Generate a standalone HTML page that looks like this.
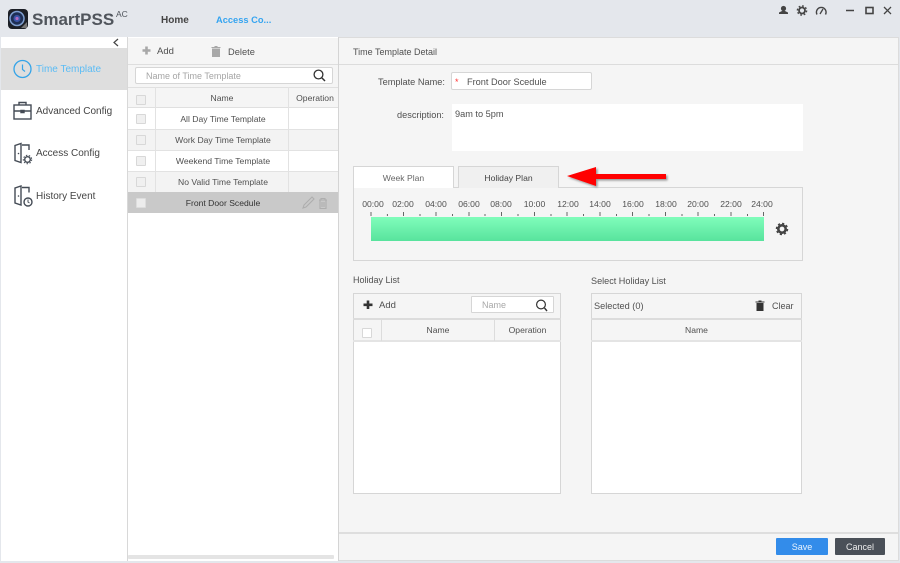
<!DOCTYPE html>
<html><head><meta charset="utf-8"><style>
html,body{margin:0;padding:0;width:900px;height:563px;overflow:hidden;background:#e4e7ec;font-family:"Liberation Sans",sans-serif;font-size:9px;color:#505050}
.a{position:absolute;box-sizing:border-box}
.t{position:absolute;white-space:nowrap;line-height:14px}
.c{text-align:center}
.h{font-size:8.6px}
.m{font-size:9.2px}
.cb{position:absolute;width:10px;height:10px;background:#f0f0f0;border:1px solid #d8d8d8;box-sizing:border-box;border-radius:1px}
svg{position:absolute;overflow:visible}
</style></head><body>
<!-- header -->
<svg style="left:0;top:0" width="40" height="37">
<rect x="8" y="9" width="20" height="20" rx="4" fill="#1c1f26"/>
<circle cx="17" cy="18.500" r="7" fill="#1e2f55" stroke="#7f9fd0" stroke-width="1.500"/>
<circle cx="17" cy="18.500" r="3.500" fill="#3a55a8"/>
<circle cx="17" cy="18.500" r="1.600" fill="#b06ac0"/>
<path d="M21 28l6-6v6z" fill="#777"/>
</svg>
<div class="t" style="left:32px;top:10px;font-size:17px;font-weight:bold;color:#50555c;line-height:20px">SmartPSS</div>
<div class="t" style="left:116px;top:9px;font-size:8.500px;color:#50555c;line-height:11px">AC</div>
<div class="t" style="left:161px;top:14px;font-size:10px;font-weight:bold;color:#444">Home</div>
<div class="t" style="left:216px;top:13px;font-size:9.300px;font-weight:bold;color:#35a4f0">Access Co...</div>
<svg style="left:0;top:0" width="900" height="37">
<g fill="#444"><circle cx="783.500" cy="8.500" r="2.600"/><path d="M779 14h9v-1.500l-3-1.500h-3l-3 1.500z"/></g>
<circle cx="802" cy="10.500" r="3" fill="none" stroke="#444" stroke-width="1.800"/>
<circle cx="802" cy="10.500" r="4.600" fill="none" stroke="#444" stroke-width="1.400" stroke-dasharray="1.800 1.800"/>
<path d="M817 14.500a4.800 4.800 0 1 1 8.500 0" fill="none" stroke="#444" stroke-width="1.400"/><path d="M820 14l3-5" stroke="#444" stroke-width="1.300"/>
<path d="M846 10.500h8" stroke="#444" stroke-width="1.500"/>
<rect x="866" y="7.500" width="7" height="6" fill="none" stroke="#444" stroke-width="1.600"/>
<path d="M884 7l7 7M891 7l-7 7" stroke="#444" stroke-width="1.300"/>
</svg>
<!-- sidebar -->
<div class="a" style="left:1px;top:37px;width:127px;height:524px;background:#fff;border-right:1px solid #d8d8d8"></div>
<svg style="left:0;top:0" width="127" height="50"><path d="M118 39l-4 3.500 4 3.500" fill="none" stroke="#444" stroke-width="1.200"/></svg>
<div class="a" style="left:1px;top:48px;width:126px;height:42px;background:#dedede"></div>
<svg style="left:0;top:0" width="127" height="220">
<circle cx="22.500" cy="69" r="8.500" fill="none" stroke="#35a4e8" stroke-width="1.300"/><path d="M22.500 64.500v5l2.500 2" fill="none" stroke="#35a4e8" stroke-width="1.200"/>
<g fill="none" stroke="#444b55" stroke-width="1.400"><rect x="14" y="105" width="17" height="14"/><path d="M14 111h17M19 105v-2.500h7v2.500" /><path d="M21 110.500h3v2h-3z" fill="#444b55"/>
<path d="M15 145.500v15l6 2v-19l-6 2zM22 145h7v5"/>
<path d="M15 188v15l6 2v-19l-6 2zM22 187.500h7v5"/>
<circle cx="27.500" cy="159.500" r="2.800"/><circle cx="27.500" cy="159.500" r="4.200" stroke-width="1" stroke-dasharray="1.500 1.500"/>
<circle cx="28" cy="202" r="4"/><path d="M28 199.500v2.500l1.500 1" stroke-width="1"/></g>
<circle cx="18.500" cy="153.500" r=".8" fill="#444b55"/><circle cx="18.500" cy="196" r=".8" fill="#444b55"/>
</svg>
<div class="t" style="left:36px;top:63px;font-size:10px;color:#5bbcf5">Time Template</div>
<div class="t" style="left:36px;top:105px;font-size:10px;color:#444">Advanced Config</div>
<div class="t" style="left:36px;top:147px;font-size:10px;color:#444">Access Config</div>
<div class="t" style="left:36px;top:190px;font-size:10px;color:#444">History Event</div>
<!-- list panel -->
<div class="a" style="left:128px;top:37px;width:211px;height:524px;background:#fff;border-right:1px solid #d4d4d4"></div>
<div class="a" style="left:128px;top:38px;width:210px;height:27px;background:#f5f5f5;border-bottom:1px solid #dedede"></div>
<div class="a" style="left:128px;top:65px;width:210px;height:22px;background:#f5f5f5"></div>
<svg style="left:0;top:0" width="300" height="60"><path d="M146.500 46.500v8M142.500 50.500h8" stroke="#a8a8a8" stroke-width="2.600"/>
<path d="M212.500 49h7v7.500h-7zM211.500 47.500h9M214.500 46.500h3" fill="#a8a8a8" stroke="#a8a8a8" stroke-width="1"/></svg>
<div class="t" style="left:157px;top:45px;font-size:9.500px">Add</div>
<div class="t" style="left:228px;top:45px;font-size:9.300px">Delete</div>
<div class="a" style="left:135px;top:67px;width:198px;height:17px;background:#fff;border:1px solid #d6d6d6;border-radius:2px"></div>
<div class="t" style="left:146px;top:68.500px;font-size:9px;color:#a5a5a5">Name of Time Template</div>
<svg style="left:0;top:0" width="340" height="90"><circle cx="318.500" cy="74.500" r="4.400" fill="none" stroke="#333" stroke-width="1.300"/><path d="M322 78l3 3" stroke="#333" stroke-width="1.500"/></svg>
<!-- table -->
<div class="a" style="left:128px;top:87px;width:210px;height:21px;background:#f5f5f5;border-top:1px solid #e0e0e0;border-bottom:1px solid #e0e0e0"></div>
<div class="a" style="left:128px;top:129px;width:210px;height:21px;background:#f3f3f3"></div>
<div class="a" style="left:128px;top:171px;width:210px;height:21px;background:#f3f3f3"></div>
<div class="a" style="left:128px;top:129px;width:210px;height:1px;background:#e2e2e2"></div>
<div class="a" style="left:128px;top:150px;width:210px;height:1px;background:#e2e2e2"></div>
<div class="a" style="left:128px;top:171px;width:210px;height:1px;background:#e2e2e2"></div>
<div class="a" style="left:155px;top:87px;width:1px;height:105px;background:#e2e2e2"></div>
<div class="a" style="left:288px;top:87px;width:1px;height:105px;background:#e2e2e2"></div>
<div class="a" style="left:128px;top:192px;width:210px;height:21px;background:#c9c9c9"></div>
<div class="cb" style="left:136px;top:95px"></div>
<div class="cb" style="left:136px;top:114px"></div>
<div class="cb" style="left:136px;top:135px"></div>
<div class="cb" style="left:136px;top:156px"></div>
<div class="cb" style="left:136px;top:177px"></div>
<div class="cb" style="left:136px;top:198px;background:#ececec;border-color:#ddd"></div>
<div class="t c h" style="left:156px;width:132px;top:91px">Name</div>
<div class="t c h" style="left:289px;width:52px;top:91px">Operation</div>
<div class="t c h" style="left:156px;width:134px;top:112px">All Day Time Template</div>
<div class="t c h" style="left:156px;width:134px;top:133px">Work Day Time Template</div>
<div class="t c h" style="left:156px;width:134px;top:154px">Weekend Time Template</div>
<div class="t c h" style="left:156px;width:134px;top:175px">No Valid Time Template</div>
<div class="t c h" style="left:156px;width:134px;top:196px;color:#333">Front Door Scedule</div>
<svg style="left:0;top:0" width="340" height="220" fill="none" stroke="#aeaeae" stroke-width="1.100">
<path d="M303 208l1-3 8-8 2 2-8 8z"/><path d="M319 200h8M321 200v-1.500h4v1.500M320 200.500v8h6v-8M322 202v5M324 202v5"/></svg>
<div class="a" style="left:128px;top:555px;width:206px;height:4px;background:#e4e4e4;border-radius:1px"></div>
<!-- detail -->
<div class="a" style="left:339px;top:37px;width:560px;height:524px;background:#f5f5f5;border-top:1px solid #dcdcdc;border-right:1px solid #dcdcdc;border-bottom:1px solid #dcdcdc"></div>
<div class="a" style="left:339px;top:64px;width:559px;height:1px;background:#dcdcdc"></div>
<div class="t" style="left:353px;top:44.500px;font-size:9px">Time Template Detail</div>
<div class="t m" style="left:378px;top:74.500px">Template Name:</div>
<div class="a" style="left:451px;top:72px;width:141px;height:18px;background:#fff;border:1px solid #d6d6d6;border-radius:2px"></div>
<div class="t" style="left:455px;top:75px;font-size:9px;color:#f33">*</div>
<div class="t m" style="left:467px;top:74.500px">Front Door Scedule</div>
<div class="t m" style="left:397px;top:107.500px">description:</div>
<div class="a" style="left:452px;top:104px;width:351px;height:47px;background:#fff"></div>
<div class="t m" style="left:455px;top:106.500px">9am to 5pm</div>
<!-- tabs -->
<div class="a" style="left:353px;top:187px;width:450px;height:74px;border:1px solid #d6d6d6"></div>
<div class="a" style="left:353px;top:166px;width:101px;height:22px;background:#fff;border:1px solid #d6d6d6;border-bottom:none"></div>
<div class="a" style="left:458px;top:166px;width:101px;height:22px;background:#f0f0f0;border:1px solid #d6d6d6;border-bottom:none"></div>
<div class="t c h" style="left:353px;width:101px;top:170.500px;color:#666">Week Plan</div>
<div class="t c h" style="left:458px;width:101px;top:170.500px;color:#444">Holiday Plan</div>
<svg style="left:0;top:0" width="700" height="200"><defs><filter id="s" x="-10%" y="-30%" width="125%" height="170%"><feDropShadow dx="1.500" dy="1.500" stdDeviation="1" flood-color="#000" flood-opacity=".4"/></filter></defs>
<path d="M567 176l29-9v7h70v5h-70v7z" fill="#f00" filter="url(#s)"/></svg>
<!-- timeline labels -->
<div class="t c h" style="left:353px;width:40px;top:197px">00:00</div>
<div class="t c h" style="left:383px;width:40px;top:197px">02:00</div>
<div class="t c h" style="left:416px;width:40px;top:197px">04:00</div>
<div class="t c h" style="left:449px;width:40px;top:197px">06:00</div>
<div class="t c h" style="left:481px;width:40px;top:197px">08:00</div>
<div class="t c h" style="left:514.500px;width:40px;top:197px">10:00</div>
<div class="t c h" style="left:548px;width:40px;top:197px">12:00</div>
<div class="t c h" style="left:580px;width:40px;top:197px">14:00</div>
<div class="t c h" style="left:613px;width:40px;top:197px">16:00</div>
<div class="t c h" style="left:646px;width:40px;top:197px">18:00</div>
<div class="t c h" style="left:678px;width:40px;top:197px">20:00</div>
<div class="t c h" style="left:711px;width:40px;top:197px">22:00</div>
<div class="t c h" style="left:742px;width:40px;top:197px">24:00</div>
<svg style="left:0;top:0" width="800" height="220" stroke="#666" stroke-width="1">
<path d="M371 212v4M387.400 214v2M403.500 212v4M420 214v2M436 212v4M452.500 214v2M469 212v4M485 214v2M501.500 212v4M518 214v2M534.500 212v4M551 214v2M567 212v4M583.500 214v2M600 212v4M616.500 214v2M632.500 212v4M649 214v2M665.500 212v4M682 214v2M698 212v4M714.500 214v2M731 212v4M747.500 214v2M763.500 212v4"/></svg>
<div class="a" style="left:371px;top:217px;width:393px;height:24px;background:linear-gradient(#80fdbb,#58e39d)"></div>
<svg style="left:0;top:0" width="800" height="240"><circle cx="782" cy="229" r="3.700" fill="none" stroke="#444" stroke-width="2.600"/><circle cx="782" cy="229" r="5.500" fill="none" stroke="#444" stroke-width="1.500" stroke-dasharray="2.200 2.100"/></svg>
<!-- holiday list -->
<div class="t" style="left:353px;top:273px;font-size:9px">Holiday List</div>
<div class="t" style="left:591px;top:274px;font-size:9.100px">Select Holiday List</div>
<div class="a" style="left:353px;top:293px;width:208px;height:201px;background:#fff;border:1px solid #d6d6d6"></div>
<div class="a" style="left:354px;top:294px;width:206px;height:47px;background:#f5f5f5"></div>
<div class="a" style="left:353px;top:318px;width:208px;height:2px;background:#dcdcdc"></div>
<div class="a" style="left:353px;top:340px;width:208px;height:2px;background:#e4e4e4"></div>
<div class="a" style="left:381px;top:320px;width:1px;height:21px;background:#dcdcdc"></div>
<div class="a" style="left:494px;top:320px;width:1px;height:21px;background:#dcdcdc"></div>
<svg style="left:0;top:0" width="600" height="320"><path d="M368 300.500v8.500M363.500 304.800h9" stroke="#333" stroke-width="2.600"/></svg>
<div class="t" style="left:379px;top:298.500px;font-size:9.500px">Add</div>
<div class="a" style="left:471px;top:296px;width:83px;height:17px;background:#fff;border:1px solid #d6d6d6;border-radius:1px"></div>
<div class="t" style="left:482px;top:297.500px;font-size:9px;color:#a8a8a8">Name</div>
<svg style="left:0;top:0" width="600" height="320"><circle cx="541" cy="304.500" r="4.400" fill="none" stroke="#333" stroke-width="1.200"/><path d="M544.500 308l2.500 3" stroke="#333" stroke-width="1.400"/></svg>
<div class="cb" style="left:362px;top:328px;background:#fff"></div>
<div class="t c h" style="left:382px;width:112px;top:323px">Name</div>
<div class="t c h" style="left:495px;width:65px;top:323px">Operation</div>
<div class="a" style="left:591px;top:293px;width:211px;height:201px;background:#fff;border:1px solid #d6d6d6"></div>
<div class="a" style="left:592px;top:294px;width:209px;height:47px;background:#f5f5f5"></div>
<div class="a" style="left:591px;top:318px;width:211px;height:2px;background:#dcdcdc"></div>
<div class="a" style="left:591px;top:340px;width:211px;height:2px;background:#e4e4e4"></div>
<div class="t" style="left:594px;top:299px;font-size:9.200px">Selected (0)</div>
<svg style="left:0;top:0" width="800" height="320" fill="#333"><path d="M756.500 303h7v8h-7zM755.500 301.500h9v1h-9zM758.500 300.500h3v1h-3z"/></svg>
<div class="t" style="left:772px;top:299px;font-size:9px">Clear</div>
<div class="t c h" style="left:592px;width:209px;top:323px">Name</div>
<!-- footer -->
<div class="a" style="left:339px;top:532px;width:559px;height:2px;background:#dedede"></div>
<div class="a" style="left:776px;top:538px;width:52px;height:17px;background:#338cea;border-radius:1px;color:#e8f2fd;text-align:center;font-size:9px;line-height:18px">Save</div>
<div class="a" style="left:835px;top:538px;width:50px;height:17px;background:#4a5058;border-radius:1px;color:#eee;text-align:center;font-size:9px;line-height:18px">Cancel</div>
</body></html>
